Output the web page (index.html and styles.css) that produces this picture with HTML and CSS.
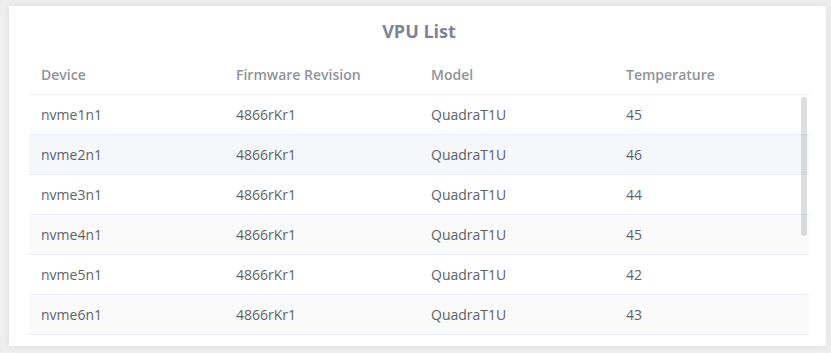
FILE: index.html
```html
<!DOCTYPE html>
<html lang="en">
<head>
  <meta charset="UTF-8" />
  <meta name="viewport" content="width=device-width, initial-scale=1.0" />
  <title>VPU List</title>
  <link rel="stylesheet" href="styles.css">
</head>
<body>

  <div class="card">
    <h2 class="card-title">VPU List</h2>

    <div class="vpu-table">
      <div class="table-row table-head">
        <div class="cell">Device</div>
        <div class="cell">Firmware Revision</div>
        <div class="cell">Model</div>
        <div class="cell">Temperature</div>
      </div>

      <div class="table-body">
        <div class="table-row">
          <div class="cell">nvme1n1</div><div class="cell">4866rKr1</div><div class="cell">QuadraT1U</div><div class="cell">45</div>
        </div>
        <div class="table-row hover">
          <div class="cell">nvme2n1</div><div class="cell">4866rKr1</div><div class="cell">QuadraT1U</div><div class="cell">46</div>
        </div>
        <div class="table-row">
          <div class="cell">nvme3n1</div><div class="cell">4866rKr1</div><div class="cell">QuadraT1U</div><div class="cell">44</div>
        </div>
        <div class="table-row striped">
          <div class="cell">nvme4n1</div><div class="cell">4866rKr1</div><div class="cell">QuadraT1U</div><div class="cell">45</div>
        </div>
        <div class="table-row">
          <div class="cell">nvme5n1</div><div class="cell">4866rKr1</div><div class="cell">QuadraT1U</div><div class="cell">42</div>
        </div>
        <div class="table-row striped">
          <div class="cell">nvme6n1</div><div class="cell">4866rKr1</div><div class="cell">QuadraT1U</div><div class="cell">43</div>
        </div>

        <div class="scroll-thumb"></div>
      </div>
    </div>
  </div>

</body>
</html>
```

FILE: styles.css
```css
body {
  font-family: 'Open Sans', 'Noto Sans', sans-serif;
  background: #efefef;
  margin: 0;
  padding: 6px 5px 8px 9px;
}

.card {
  background: #fff;
  padding: 14px 17px 11px 20px;
  box-shadow: 0 0 8px rgba(0, 0, 0, 0.08);
}

.card-title {
  margin: 0 0 13px;
  text-align: center;
  font-size: 18px;
  line-height: 22px;
  font-weight: 700;
  color: #7d8398;
}

.vpu-table {
  font-size: 14px;
  color: #606266;
}

.table-row {
  display: grid;
  grid-template-columns: repeat(4, 1fr);
  height: 39px;
  align-items: center;
  border-bottom: 1px solid #ebeef5;
}

.table-head {
  color: #909399;
  font-weight: 600;
}

.cell {
  padding-left: 12px;
}

.table-body {
  position: relative;
  height: 240px;
  overflow: hidden;
}

.table-row.hover {
  background: #f5f7fa;
}

.table-row.striped {
  background: #fafafa;
}

.scroll-thumb {
  position: absolute;
  top: 2px;
  right: 2px;
  width: 6px;
  height: 139px;
  border-radius: 3px;
  background: rgba(144, 147, 153, 0.3);
}
```
